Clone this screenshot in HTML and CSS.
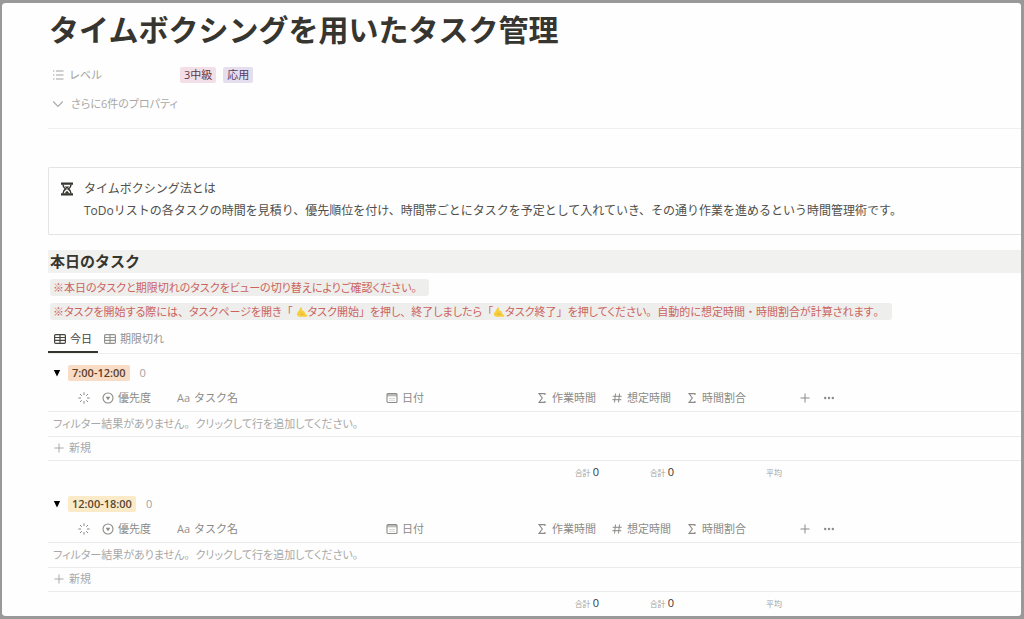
FILE: index.html
```html
<!DOCTYPE html>
<html lang="ja">
<head>
<meta charset="utf-8">
<meta name="viewport" content="width=device-width, initial-scale=1">
<title>タイムボクシングを用いたタスク管理</title>
<link rel="stylesheet" href="styles.css">
</head>
<body>
<svg class="sprite" aria-hidden="true">
  <symbol id="list" viewBox="0 0 12 12"><path d="M1 2h1.4M1 6h1.4M1 10h1.4M4 2h7.5M4 6h7.5M4 10h7.5" fill="none" stroke="currentColor" stroke-width="1.1"/></symbol>
  <symbol id="chevron" viewBox="0 0 12 12"><path d="M1.2 3.5 6 8.5l4.800-5" fill="none" stroke="currentColor" stroke-width="1.1"/></symbol>
  <symbol id="hourglass" viewBox="0 0 14 14"><path d="M1 .5h12v2.300H1zM1 11.200h12v2.300H1z" fill="currentColor"/><path d="M3 2.500c0 2.500 1 3.500 2.600 4.500C4 8 3 9 3 11.500M11 2.500c0 2.500-1 3.500-2.600 4.500C10 8 11 9 11 11.500" fill="none" stroke="currentColor" stroke-width="1.500"/><path d="M4.600 4.600h4.800L7 7zM7 8.800 9.500 11.500h-5z" fill="currentColor"/></symbol>
  <symbol id="grid" viewBox="0 0 12 10"><path d="M1.700.6h8.600q1.100 0 1.100 1.100v6.600q0 1.100-1.100 1.100H1.700Q.6 9.400.6 8.300V1.700Q.6.6 1.700.6zM.6 3.500h10.800M.6 6.400h10.800M6 .6v8.800" fill="none" stroke="currentColor" stroke-width="1.200"/></symbol>
  <symbol id="loader" viewBox="0 0 12 12"><path d="M6 .3v2.700M6 9v2.700M.3 6H3M9 6h2.700M2 2l1.800 1.800M8.200 8.200 10 10M10 2 8.200 3.800M3.800 8.200 2 10" fill="none" stroke="currentColor" stroke-width="1"/></symbol>
  <symbol id="select" viewBox="0 0 12 12"><circle cx="6" cy="6" r="5" fill="none" stroke="currentColor" stroke-width="1.100"/><path d="M3.700 4.700h4.600L6 8.200z" fill="currentColor"/></symbol>
  <symbol id="calendar" viewBox="0 0 12 12"><rect x="1" y="1.500" width="10" height="9" rx="1" fill="none" stroke="currentColor" stroke-width="1.100"/><path d="M1 2h10v2.300H1z" fill="currentColor" opacity=".6"/><path d="M3 6.500h6M3 8.300h6" stroke="currentColor" stroke-width=".6" opacity=".5"/></symbol>
  <symbol id="sigma" viewBox="0 0 12 12"><path d="M9 3V1.600H3L6.300 6 3 10.400h6V9" fill="none" stroke="currentColor" stroke-width="1.100"/></symbol>
  <symbol id="hash" viewBox="0 0 12 12"><path d="M4.500 1.500 3.500 10.500M8.500 1.500 7.500 10.500M1.700 4.300h9M1.300 7.700h9" fill="none" stroke="currentColor" stroke-width="1"/></symbol>
  <symbol id="plus" viewBox="0 0 12 12"><path d="M6 1.500v9M1.500 6h9" fill="none" stroke="currentColor" stroke-width="1"/></symbol>
  <symbol id="dots" viewBox="0 0 12 12"><circle cx="2.200" cy="6" r="1.200"/><circle cx="6" cy="6" r="1.200"/><circle cx="9.800" cy="6" r="1.200"/></symbol>
  <symbol id="triangle" viewBox="0 0 8 8"><path d="M.8 1h6.400L4 7.500z"/></symbol>
  <symbol id="hand" viewBox="0 0 12 12"><path d="M1.300 9.600C.5 8.500 1 6.800 2.300 5.600L4.500 1.800q.8-1 1.500 0L5.800 4l2.600 1.500L9.500 8l2 1.500-.8 1.200H3z" fill="#f6ce3c"/><path d="m4 8 3.500.5" stroke="#dca92f" stroke-width=".7" fill="none"/></symbol>
</svg>
<main class="page">
  <h1 class="title">タイムボクシングを用いたタスク管理</h1>
  <dl class="property">
    <dt class="property-name"><svg class="icon"><use href="#list"/></svg>レベル</dt>
    <dd class="property-value"><span class="tag pink">3中級</span><span class="tag purple">応用</span></dd>
  </dl>
  <button class="more"><svg class="icon"><use href="#chevron"/></svg>さらに6件のプロパティ</button>

  <aside class="callout">
    <svg class="callout-icon"><use href="#hourglass"/></svg>
    <div>
      <p class="callout-line">タイムボクシング法とは</p>
      <p class="callout-line">ToDoリストの各タスクの時間を見積り、優先順位を付け、時間帯ごとにタスクを予定として入れていき、その通り作業を進めるという時間管理術です。</p>
    </div>
  </aside>

  <h2 class="heading">本日のタスク</h2>
  <p class="note"><span class="code">※本日のタスクと期限切れのタスクをビューの切り替えによりご確認ください<span class="full">。</span></span></p>
  <p class="note"><span class="code">※タスクを開始する際には<span class="full">、</span>タスクページを開き<span class="full">「</span> <svg class="hand"><use href="#hand"/></svg>タスク開始<span class="full">」</span>を押し<span class="full">、</span>終了しましたら<span class="full">「</span><svg class="hand"><use href="#hand"/></svg>タスク終了<span class="full">」</span>を押してください<span class="full">。</span>自動的に想定時間<span class="full">・</span>時間割合が計算されます<span class="full">。</span></span></p>

  <nav class="tabs">
    <button class="tab active"><svg class="icon"><use href="#grid"/></svg>今日</button>
    <button class="tab"><svg class="icon"><use href="#grid"/></svg>期限切れ</button>
  </nav>

  <section class="group">
    <h3 class="group-head"><button class="toggle" aria-label="折りたたむ"><svg class="tri"><use href="#triangle"/></svg></button><span class="tag slot orange">7:00-12:00</span><span class="count">0</span></h3>
    <table class="tasks">
      <colgroup><col class="c-load"><col class="c-level"><col class="c-name"><col class="c-date"><col class="c-mid"><col class="c-mid"><col class="c-ratio"><col></colgroup>
      <thead><tr>
        <th><div class="cell end"><svg class="icon"><use href="#loader"/></svg></div></th>
        <th><div class="cell"><svg class="icon"><use href="#select"/></svg>優先度</div></th>
        <th><div class="cell"><span class="aa">Aa</span>タスク名</div></th>
        <th><div class="cell"><svg class="icon"><use href="#calendar"/></svg>日付</div></th>
        <th><div class="cell"><svg class="icon"><use href="#sigma"/></svg>作業時間</div></th>
        <th><div class="cell"><svg class="icon"><use href="#hash"/></svg>想定時間</div></th>
        <th><div class="cell"><svg class="icon"><use href="#sigma"/></svg>時間割合</div></th>
        <th><div class="cell tools"><button class="tool" aria-label="列を追加"><svg class="icon"><use href="#plus"/></svg></button><button class="tool" aria-label="その他"><svg class="icon"><use href="#dots"/></svg></button></div></th>
      </tr></thead>
      <tbody>
        <tr><td colspan="8"><button class="row">フィルター結果がありません<span class="full">。</span>クリックして行を追加してください<span class="full">。</span></button></td></tr>
        <tr class="new"><td colspan="8"><button class="row"><svg class="icon"><use href="#plus"/></svg>新規</button></td></tr>
      </tbody>
      <tfoot><tr><td colspan="4"></td><td class="sum">合計 <b class="num">0</b></td><td class="sum">合計 <b class="num">0</b></td><td class="sum">平均</td><td></td></tr></tfoot>
    </table>
  </section>

  <section class="group">
    <h3 class="group-head"><button class="toggle" aria-label="折りたたむ"><svg class="tri"><use href="#triangle"/></svg></button><span class="tag slot yellow">12:00-18:00</span><span class="count">0</span></h3>
    <table class="tasks">
      <colgroup><col class="c-load"><col class="c-level"><col class="c-name"><col class="c-date"><col class="c-mid"><col class="c-mid"><col class="c-ratio"><col></colgroup>
      <thead><tr>
        <th><div class="cell end"><svg class="icon"><use href="#loader"/></svg></div></th>
        <th><div class="cell"><svg class="icon"><use href="#select"/></svg>優先度</div></th>
        <th><div class="cell"><span class="aa">Aa</span>タスク名</div></th>
        <th><div class="cell"><svg class="icon"><use href="#calendar"/></svg>日付</div></th>
        <th><div class="cell"><svg class="icon"><use href="#sigma"/></svg>作業時間</div></th>
        <th><div class="cell"><svg class="icon"><use href="#hash"/></svg>想定時間</div></th>
        <th><div class="cell"><svg class="icon"><use href="#sigma"/></svg>時間割合</div></th>
        <th><div class="cell tools"><button class="tool" aria-label="列を追加"><svg class="icon"><use href="#plus"/></svg></button><button class="tool" aria-label="その他"><svg class="icon"><use href="#dots"/></svg></button></div></th>
      </tr></thead>
      <tbody>
        <tr><td colspan="8"><button class="row">フィルター結果がありません<span class="full">。</span>クリックして行を追加してください<span class="full">。</span></button></td></tr>
        <tr class="new"><td colspan="8"><button class="row"><svg class="icon"><use href="#plus"/></svg>新規</button></td></tr>
      </tbody>
      <tfoot><tr><td colspan="4"></td><td class="sum">合計 <b class="num">0</b></td><td class="sum">合計 <b class="num">0</b></td><td class="sum">平均</td><td></td></tr></tfoot>
    </table>
  </section>
</main>
</body>
</html>
```

FILE: styles.css
```css
* { box-sizing: border-box; margin: 0; padding: 0; }
html { background: #fff; }
body {
  background: #999;
  color: #37352f;
  font: 11px/16px "Open Sans", "Noto Sans CJK JP", sans-serif;
}
button { border: 0; background: none; font: inherit; color: inherit; cursor: pointer; }
.sprite { display: none; }
.page {
  min-height: 100vh;
  padding: 7px 0 0 46px;
  border: 3px solid #999;
  border-left-width: 2px;
  border-radius: 6px;
  background: #fefefe;
}
.icon { width: 12px; height: 12px; flex: none; fill: currentColor; }

.title { padding-left: 1px; font-size: 30px; line-height: 40px; font-weight: 700; }
.property { display: flex; align-items: center; margin-top: 17px; padding-left: 4px; }
.property-name { display: flex; align-items: center; gap: 5px; width: 128px; color: #a3a2a0; }
.property-value { display: flex; gap: 7px; }
.tag { padding: 0 4px; border-radius: 2px; line-height: 16px; }
.pink { background: #f2dfe7; color: #5f3a4b; }
.purple { background: #e5deee; color: #543b66; }
.orange { background: #f8dcc6; color: #5c4029; }
.yellow { background: #fbeac8; color: #584632; }
.more {
  display: flex; align-items: center; gap: 7px;
  width: 100%; margin-top: 13px; padding: 0 0 16px 4px;
  border-bottom: 1px solid #efefee;
  color: #a9a8a6;
  font-feature-settings: "palt";
}

.callout {
  display: flex; gap: 10px;
  margin-top: 38px; padding: 10px 11px 12px;
  border: 1px solid #e4e4e2; border-right: 0; border-radius: 2px 0 0 2px;
}
.callout-icon { width: 14px; height: 14px; margin-top: 4px; flex: none; }
.callout-line { font-size: 12px; line-height: 22px; color: #504f4b; }

.heading { margin-top: 15px; padding-left: 2px; background: #f1f1ef; font-size: 15px; line-height: 23px; }
.note { display: flex; margin-top: 6px; padding-left: 2px; }
.note + .note { margin-top: 7px; }
.code {
  padding: 0 7px 0 3px; border-radius: 3px;
  background: #eeeeec; color: #cb6360; line-height: 17px;
  font-feature-settings: "palt";
}
.full { font-feature-settings: normal; }
.hand { width: 12px; height: 12px; vertical-align: -2px; }

.tabs { display: flex; margin-top: 8px; border-bottom: 1px solid #efefee; }
.tab {
  display: flex; align-items: center; gap: 4px;
  height: 25px; padding: 0 6px 3px; color: #93928f;
}
.tab .icon { height: 10px; }
.active { border-bottom: 2px solid #37352f; padding-bottom: 1px; color: #45443f; }

.group { margin-top: 6px; }
.group-head { display: flex; align-items: center; height: 26px; font-size: 11px; font-weight: 400; }
.toggle { display: flex; width: 20px; padding-left: 5px; }
.tri { width: 8px; height: 8px; }
.slot { font-weight: 600; }
.count { margin-left: 10px; color: #a3a2a0; }

.tasks { width: 100%; table-layout: fixed; border-collapse: collapse; }
.c-load { width: 50px; }
.c-level { width: 75px; }
.c-name { width: 209px; }
.c-date { width: 150px; }
.c-mid { width: 75px; }
.c-ratio { width: 108px; }
.tasks tr { height: 25px; }
.tasks .new { height: 24px; }
.tasks th, .tasks tbody td { border-bottom: 1px solid #ebebea; }
.tasks th { font-weight: 400; text-align: left; color: #8b8a86; }
.cell { display: flex; align-items: center; gap: 4px; height: 24px; padding-left: 4px; white-space: nowrap; }
.end { justify-content: flex-end; padding-right: 8px; }
.aa { font-size: 11px; color: #92918d; }
.tools { gap: 12px; padding-left: 9px; }
.tool { display: flex; }
.row {
  display: flex; align-items: center; gap: 4px;
  width: 100%; height: 24px; padding-left: 5px;
  color: #a9a8a6;
  font-feature-settings: "palt";
}
.row:not(:has(.icon)) { gap: 0; }
.new .row { height: 23px; }
.sum { padding-right: 8px; text-align: right; font-size: 8px; color: #a3a2a0; }
.num { font-size: 11px; font-weight: 400; color: #37352f; }
```
